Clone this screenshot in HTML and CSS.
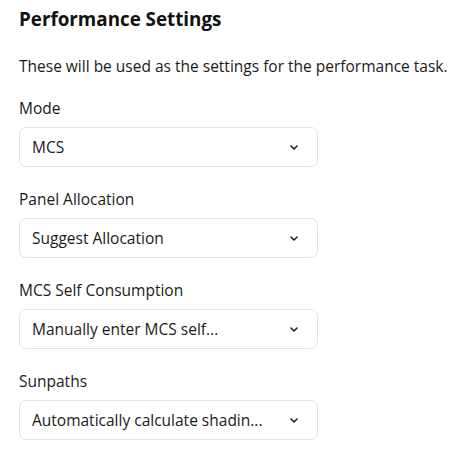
FILE: index.html
```html
<!DOCTYPE html>
<html>
<head>
<meta charset="utf-8">
<link rel="stylesheet" href="styles.css">
</head>
<body>
<div class="panel">
  <h1 class="title">Performance Settings</h1>
  <p class="desc">These will be used as the settings for the performance task.</p>
  <div class="field">
    <div class="label">Mode</div>
    <div class="select"><span class="value">MCS</span><svg class="chev" viewBox="0 0 8 5" width="8" height="5"><path d="M1 1l3 3 3-3" fill="none" stroke="#1a1a1a" stroke-width="1.5" stroke-linecap="round" stroke-linejoin="round"/></svg></div>
  </div>
  <div class="field">
    <div class="label">Panel Allocation</div>
    <div class="select"><span class="value">Suggest Allocation</span><svg class="chev" viewBox="0 0 8 5" width="8" height="5"><path d="M1 1l3 3 3-3" fill="none" stroke="#1a1a1a" stroke-width="1.5" stroke-linecap="round" stroke-linejoin="round"/></svg></div>
  </div>
  <div class="field">
    <div class="label">MCS Self Consumption</div>
    <div class="select"><span class="value">Manually enter MCS self...</span><svg class="chev" viewBox="0 0 8 5" width="8" height="5"><path d="M1 1l3 3 3-3" fill="none" stroke="#1a1a1a" stroke-width="1.5" stroke-linecap="round" stroke-linejoin="round"/></svg></div>
  </div>
  <div class="field">
    <div class="label">Sunpaths</div>
    <div class="select"><span class="value">Automatically calculate shadin...</span><svg class="chev" viewBox="0 0 8 5" width="8" height="5"><path d="M1 1l3 3 3-3" fill="none" stroke="#1a1a1a" stroke-width="1.5" stroke-linecap="round" stroke-linejoin="round"/></svg></div>
  </div>
</div>
</body>
</html>
```

FILE: styles.css
```css
html, body {
  margin: 0;
  background: #fff;
}
body {
  font-family: "Open Sans", "Noto Sans", sans-serif;
  color: #1a1a1a;
}
.panel {
  padding: 6px 0 0 19px;
  display: flex;
  flex-direction: column;
}
.title {
  margin: 0;
  font-size: 18.8px;
  font-weight: 700;
  line-height: 26px;
  color: #111;
}
.desc {
  margin: 24px 0 0 0;
  font-size: 15.5px;
  line-height: 20px;
  white-space: nowrap;
}
.field {
  display: flex;
  flex-direction: column;
  width: 299px;
  margin-top: 22px;
}
.label {
  font-size: 15.5px;
  line-height: 20px;
  margin-bottom: 9px;
}
.select {
  height: 40px;
  box-sizing: border-box;
  border: 1px solid #e3e3e3;
  border-radius: 7px;
  display: flex;
  align-items: center;
  justify-content: space-between;
  padding: 0 19px 0 12px;
  font-size: 15.5px;
}
.chev {
  display: block;
}
```
